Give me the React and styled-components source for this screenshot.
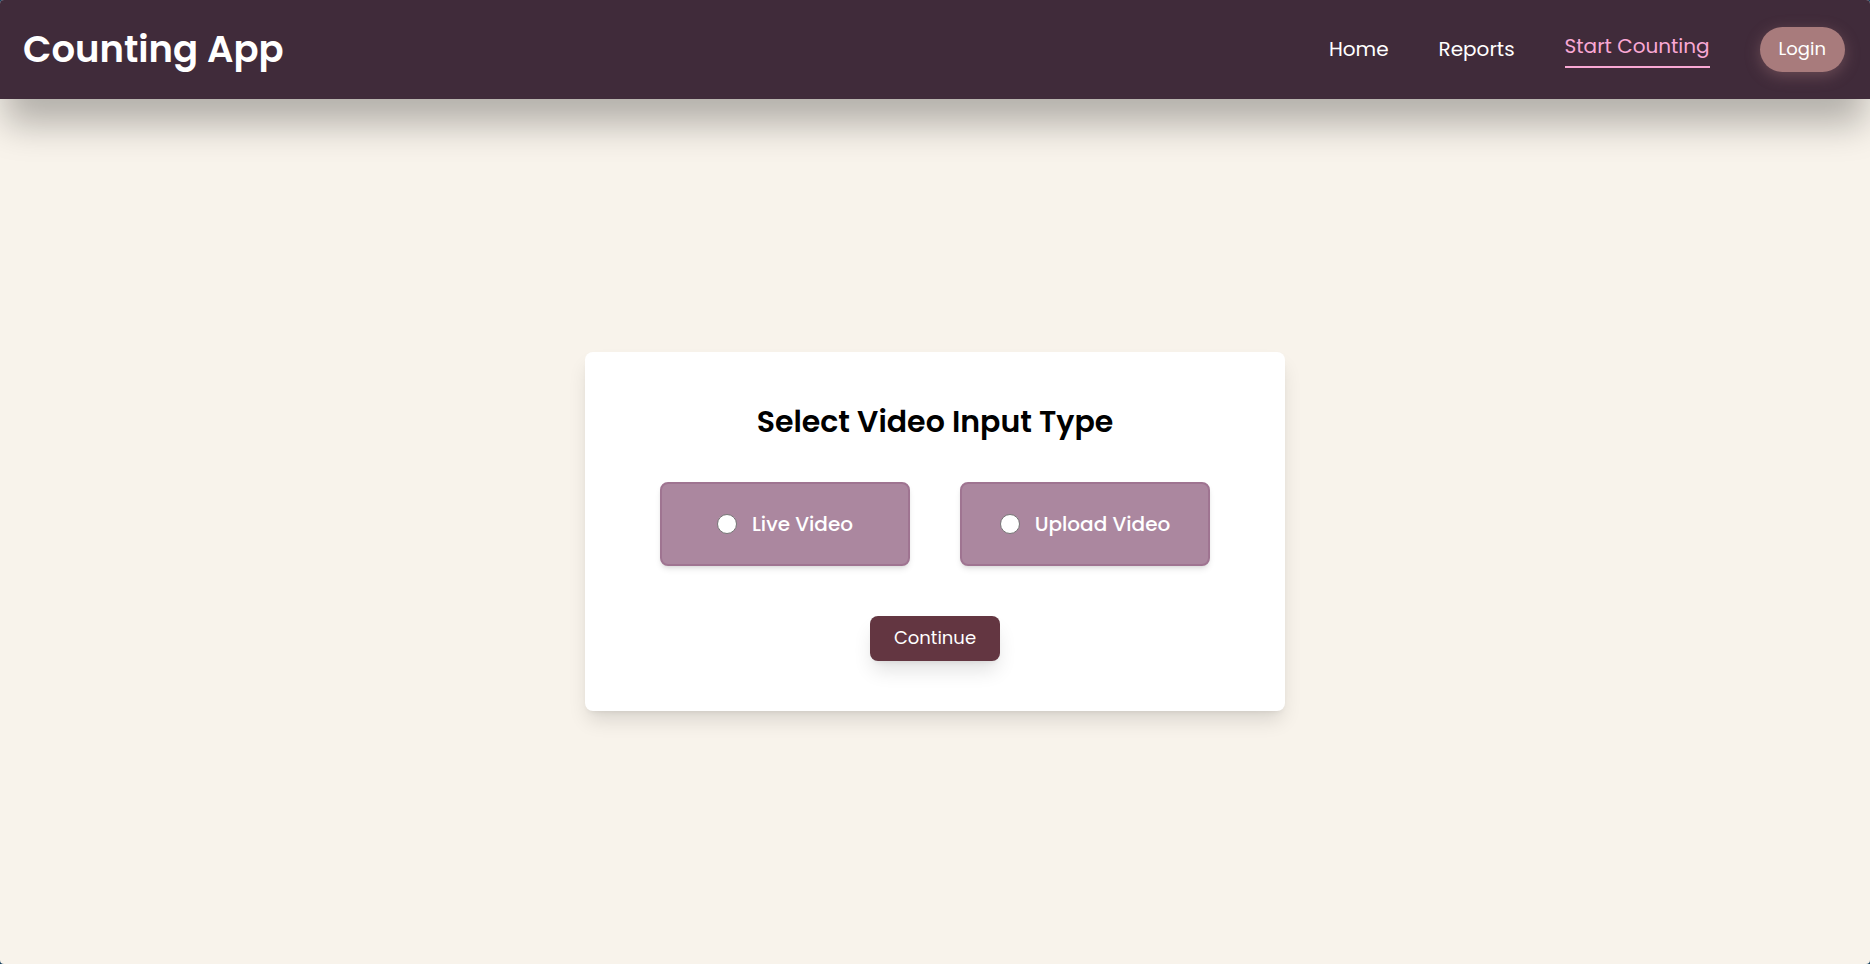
import React, { useState } from "react";
import styled, { createGlobalStyle } from "styled-components";

const GlobalStyle = createGlobalStyle`
  *, *::before, *::after { box-sizing: border-box; }
  html { background: #17405f; }
  body {
    margin: 0;
    font-family: Poppins, Inter, "Liberation Sans", sans-serif;
  }
  h1, h2 { margin: 0; }
  button, input { font: inherit; }
`;

const Shell = styled.div`
  min-height: 100vh;
  display: flex;
  flex-direction: column;
  background: #f8f3eb;
  border-radius: 4px;
  overflow: hidden;
`;

const Header = styled.header`
  display: flex;
  align-items: center;
  justify-content: space-between;
  min-height: 99px;
  padding: 0 25px 0 23px;
  background: #402b3a;
  box-shadow: 0 30px 36px -5px rgba(0, 0, 0, 0.28);
`;

const Brand = styled.h1`
  color: #fff;
  font-size: 37px;
  line-height: 57px;
  font-weight: 600;
`;

const Nav = styled.nav`
  display: flex;
  align-items: center;
  gap: 50px;
`;

const NavLink = styled.a`
  color: ${(p) => (p.$active ? "#f9a8d4" : "#fff")};
  font-size: 20px;
  line-height: 31px;
  text-decoration: none;
  ${(p) => p.$active && "padding-bottom: 4px; border-bottom: 2px solid #f9a8d4;"}
`;

const Button = styled.button`
  height: 45px;
  border: 0;
  color: #fff;
  font-size: 18px;
  cursor: pointer;
`;

const LoginButton = styled(Button)`
  padding: 0 19px 2px;
  border-radius: 23px;
  background: #a87b7c;
  box-shadow: 0 4px 15px rgba(168, 123, 124, 0.4);
`;

const Main = styled.main`
  flex: 1;
  display: flex;
  align-items: center;
  justify-content: center;
  padding: 24px;
`;

const Card = styled.form`
  width: 100%;
  max-width: 700px;
  padding: 50px 75px;
  display: flex;
  flex-direction: column;
  align-items: center;
  border-radius: 8px;
  background: #fff;
  box-shadow: 0 12px 20px -3px rgba(0, 0, 0, 0.12), 0 4px 6px -4px rgba(0, 0, 0, 0.1);
`;

const Title = styled.h2`
  margin-bottom: 40px;
  color: #000;
  font-size: 30px;
  line-height: 40px;
  font-weight: 600;
`;

const Options = styled.div`
  width: 100%;
  display: flex;
  gap: 50px;
  margin-bottom: 50px;
`;

const Option = styled.label`
  flex: 1;
  height: 84px;
  display: flex;
  align-items: center;
  justify-content: center;
  gap: 15px;
  border: 2px solid #9f7491;
  border-radius: 8px;
  background: #ab879f;
  color: #fff;
  font-size: 20px;
  font-weight: 500;
  cursor: pointer;
  box-shadow: 0 4px 6px -1px rgba(0, 0, 0, 0.1), 0 2px 4px -2px rgba(0, 0, 0, 0.1);
`;

const Radio = styled.input`
  appearance: none;
  width: 20px;
  height: 20px;
  margin: 0;
  border: 1px solid #767676;
  border-radius: 50%;
  background: #fff;
  &:checked {
    background: radial-gradient(#633641 45%, #fff 50%);
  }
`;

const ContinueButton = styled(Button)`
  padding: 0 24px 2px;
  border-radius: 8px;
  background: #633641;
  box-shadow: 0 12px 20px -3px rgba(0, 0, 0, 0.12), 0 4px 6px -4px rgba(0, 0, 0, 0.1);
`;

const links = [
  { label: "Home" },
  { label: "Reports" },
  { label: "Start Counting", active: true },
];

const inputTypes = [
  { value: "live", label: "Live Video" },
  { value: "upload", label: "Upload Video" },
];

export default function App() {
  const [type, setType] = useState("");
  return (
    <>
      <GlobalStyle />
      <Shell>
        <Header>
          <Brand>Counting App</Brand>
          <Nav>
            {links.map((l) => (
              <NavLink key={l.label} href="#" $active={l.active}>
                {l.label}
              </NavLink>
            ))}
            <LoginButton type="button">Login</LoginButton>
          </Nav>
        </Header>
        <Main>
          <Card onSubmit={(e) => e.preventDefault()}>
            <Title>Select Video Input Type</Title>
            <Options>
              {inputTypes.map((o) => (
                <Option key={o.value}>
                  <Radio
                    type="radio"
                    name="inputType"
                    value={o.value}
                    checked={type === o.value}
                    onChange={() => setType(o.value)}
                  />
                  {o.label}
                </Option>
              ))}
            </Options>
            <ContinueButton type="submit">Continue</ContinueButton>
          </Card>
        </Main>
      </Shell>
    </>
  );
}
